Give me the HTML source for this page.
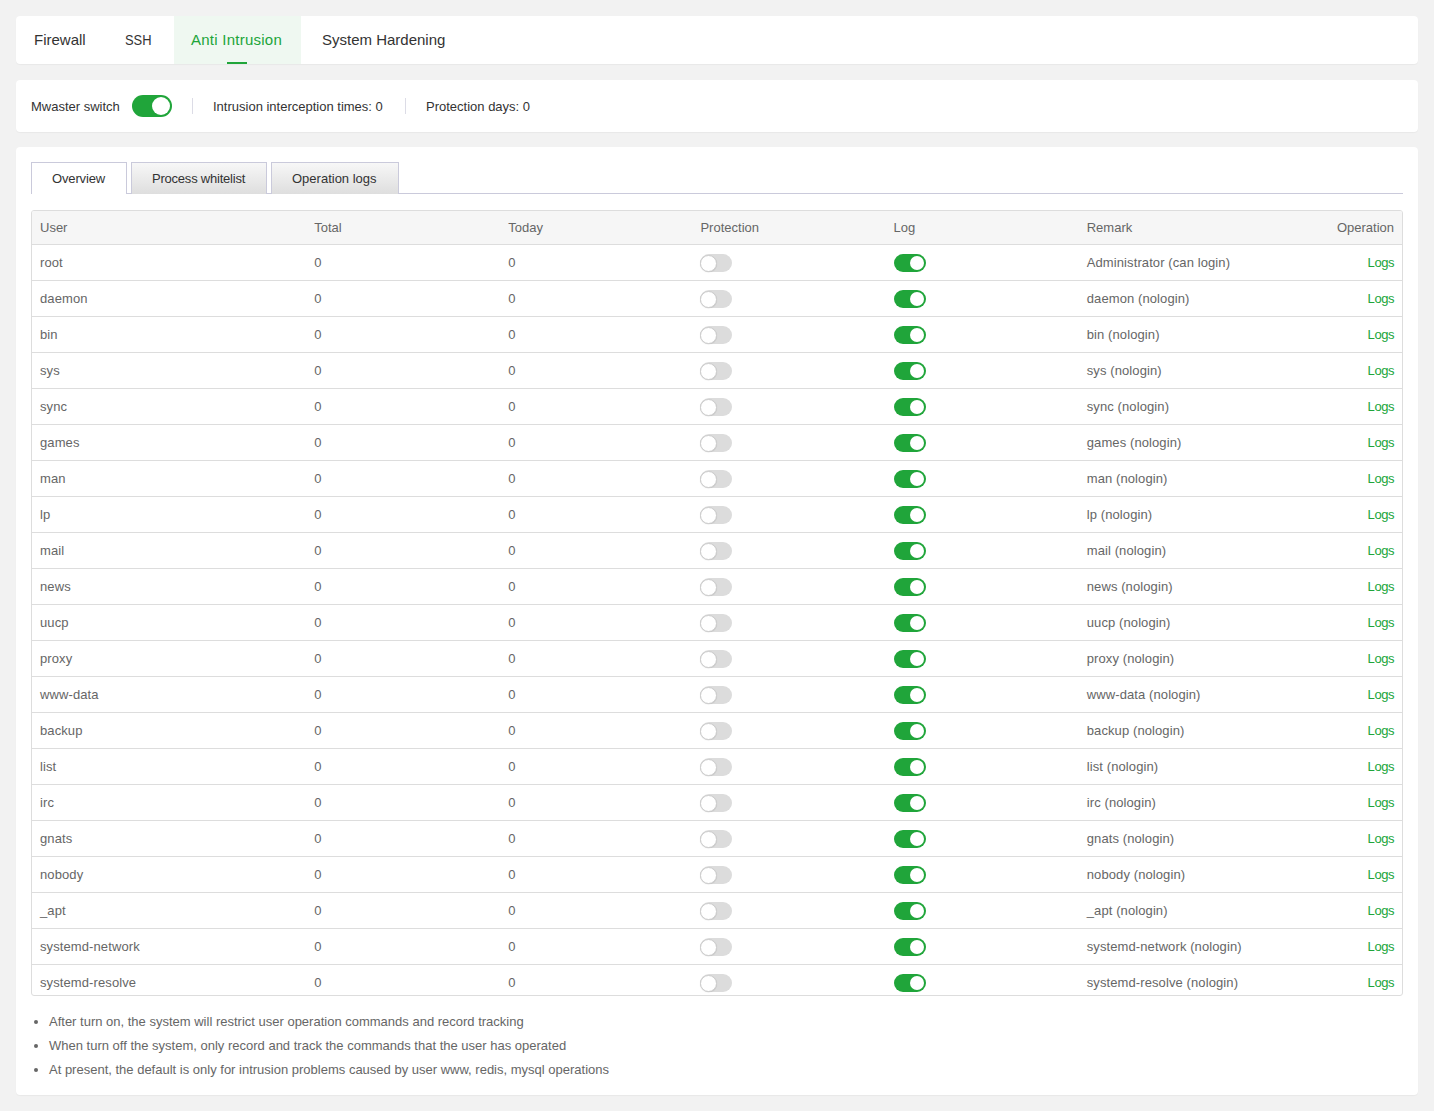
<!DOCTYPE html>
<html><head><meta charset="utf-8">
<style>
*{box-sizing:border-box;margin:0;padding:0}
html,body{width:1434px;height:1111px;overflow:hidden}
body{background:#f2f2f2;font-family:"Liberation Sans",sans-serif;font-size:13px;color:#666;position:relative}
.card{position:absolute;left:16px;width:1402px;background:#fff;border-radius:4px;box-shadow:0 0 1px rgba(0,0,0,.03),0 1px 1px rgba(0,0,0,.04)}
.c1{top:16px;height:48px}
.c2{top:80px;height:52px}
.c3{top:147px;height:948px}
.ttab{position:absolute;top:0;height:48px;line-height:48px;font-size:15px;color:#333;white-space:nowrap}
.ttab.act{color:#20a53a;background:#eff8f1}
.ttab.act:after{content:"";position:absolute;left:53px;bottom:0;width:20px;height:2px;background:#20a53a}
.c2 .lbl{position:absolute;top:1px;line-height:52px;color:#333;white-space:nowrap}
.sep{position:absolute;top:18px;width:1px;height:16px;background:#dcdce6}
.msw{position:absolute;left:116px;top:15px;width:40px;height:22px;border-radius:11px;background:#20a53a}
.msw i{position:absolute;right:2px;top:2px;width:18px;height:18px;border-radius:50%;background:#fff}
.tabnav{position:absolute;left:15px;top:15px;width:1372px;height:32px;border-bottom:1px solid #cacadb}
.tabnav span{position:absolute;top:0;height:32px;line-height:32px;border:1px solid #cacadb;border-bottom:none;color:#333;background:linear-gradient(#f7f7f7,#dedede);white-space:nowrap}
.tabnav span.act{background:#fff;height:32px}
.tbl{position:absolute;left:15px;top:63px;width:1372px;height:786px;border:1px solid #ddd;border-radius:3px;overflow:hidden;background:transparent}
table{border-collapse:collapse;table-layout:fixed;width:1370px}
th{height:33px;background:#f6f6f6;font-weight:normal;text-align:left;padding:0 8px;border-bottom:1px solid #ddd;color:#666}
td{height:36px;padding:0 8px;border-bottom:1px solid #ddd;white-space:nowrap;color:#666;letter-spacing:.1px}
td.r{letter-spacing:0}
th.r,td.r{text-align:right;padding-right:8px}
td a{color:#20a53a;letter-spacing:-.45px}
.sw{display:inline-block;vertical-align:middle;position:relative;top:1px;width:32px;height:18px;border-radius:9px}
.sw.off{background:#dcdcdc}
.sw.off i{position:absolute;left:0;top:.5px;width:17px;height:17px;border-radius:50%;background:#fff;border:1.5px solid #cdcdcd;box-shadow:0 .5px 1px rgba(0,0,0,.12)}
.sw.on{background:#20a53a}
.sw.on i{position:absolute;right:2px;top:2px;width:14px;height:14px;border-radius:50%;background:#fff}
ul.tips{position:absolute;left:33px;top:863px;list-style:none;color:#666}
ul.tips li{line-height:24px;position:relative;padding-left:0;white-space:nowrap}
ul.tips li:before{content:"";position:absolute;left:-15px;top:10px;width:4px;height:4px;border-radius:50%;background:#666}
</style></head><body>
<div class="card c1">
  <div class="ttab" style="left:18px">Firewall</div>
  <div class="ttab" style="left:108px;transform:scaleX(.86);transform-origin:7px 0">SSH</div>
  <div class="ttab act" style="left:158px;width:127px;padding-left:17px;letter-spacing:.25px">Anti Intrusion</div>
  <div class="ttab" style="left:306px">System Hardening</div>
</div>
<div class="card c2">
  <div class="lbl" style="left:15px">Mwaster switch</div>
  <div class="msw"><i></i></div>
  <div class="sep" style="left:176px"></div>
  <div class="lbl" style="left:197px">Intrusion interception times: 0</div>
  <div class="sep" style="left:389px"></div>
  <div class="lbl" style="left:410px">Protection days: 0</div>
</div>
<div class="card c3">
  <div class="tabnav">
    <span class="act" style="left:0;width:96px;padding-left:20px;letter-spacing:-.15px">Overview</span>
    <span style="left:100px;width:136px;padding-left:20px;letter-spacing:-.22px">Process whitelist</span>
    <span style="left:240px;width:128px;padding-left:20px">Operation logs</span>
  </div>
  <div class="tbl">
  <table>
  <colgroup><col style="width:274px"><col style="width:194px"><col style="width:192px"><col style="width:193px"><col style="width:193px"><col style="width:200px"><col style="width:123px"></colgroup>
  <thead><tr><th>User</th><th>Total</th><th>Today</th><th>Protection</th><th>Log</th><th>Remark</th><th class="r">Operation</th></tr></thead>
  <tbody>
<tr><td>root</td><td>0</td><td>0</td><td><span class="sw off"><i></i></span></td><td><span class="sw on"><i></i></span></td><td>Administrator (can login)</td><td class="r"><a>Logs</a></td></tr>
<tr><td>daemon</td><td>0</td><td>0</td><td><span class="sw off"><i></i></span></td><td><span class="sw on"><i></i></span></td><td>daemon (nologin)</td><td class="r"><a>Logs</a></td></tr>
<tr><td>bin</td><td>0</td><td>0</td><td><span class="sw off"><i></i></span></td><td><span class="sw on"><i></i></span></td><td>bin (nologin)</td><td class="r"><a>Logs</a></td></tr>
<tr><td>sys</td><td>0</td><td>0</td><td><span class="sw off"><i></i></span></td><td><span class="sw on"><i></i></span></td><td>sys (nologin)</td><td class="r"><a>Logs</a></td></tr>
<tr><td>sync</td><td>0</td><td>0</td><td><span class="sw off"><i></i></span></td><td><span class="sw on"><i></i></span></td><td>sync (nologin)</td><td class="r"><a>Logs</a></td></tr>
<tr><td>games</td><td>0</td><td>0</td><td><span class="sw off"><i></i></span></td><td><span class="sw on"><i></i></span></td><td>games (nologin)</td><td class="r"><a>Logs</a></td></tr>
<tr><td>man</td><td>0</td><td>0</td><td><span class="sw off"><i></i></span></td><td><span class="sw on"><i></i></span></td><td>man (nologin)</td><td class="r"><a>Logs</a></td></tr>
<tr><td>lp</td><td>0</td><td>0</td><td><span class="sw off"><i></i></span></td><td><span class="sw on"><i></i></span></td><td>lp (nologin)</td><td class="r"><a>Logs</a></td></tr>
<tr><td>mail</td><td>0</td><td>0</td><td><span class="sw off"><i></i></span></td><td><span class="sw on"><i></i></span></td><td>mail (nologin)</td><td class="r"><a>Logs</a></td></tr>
<tr><td>news</td><td>0</td><td>0</td><td><span class="sw off"><i></i></span></td><td><span class="sw on"><i></i></span></td><td>news (nologin)</td><td class="r"><a>Logs</a></td></tr>
<tr><td>uucp</td><td>0</td><td>0</td><td><span class="sw off"><i></i></span></td><td><span class="sw on"><i></i></span></td><td>uucp (nologin)</td><td class="r"><a>Logs</a></td></tr>
<tr><td>proxy</td><td>0</td><td>0</td><td><span class="sw off"><i></i></span></td><td><span class="sw on"><i></i></span></td><td>proxy (nologin)</td><td class="r"><a>Logs</a></td></tr>
<tr><td>www-data</td><td>0</td><td>0</td><td><span class="sw off"><i></i></span></td><td><span class="sw on"><i></i></span></td><td>www-data (nologin)</td><td class="r"><a>Logs</a></td></tr>
<tr><td>backup</td><td>0</td><td>0</td><td><span class="sw off"><i></i></span></td><td><span class="sw on"><i></i></span></td><td>backup (nologin)</td><td class="r"><a>Logs</a></td></tr>
<tr><td>list</td><td>0</td><td>0</td><td><span class="sw off"><i></i></span></td><td><span class="sw on"><i></i></span></td><td>list (nologin)</td><td class="r"><a>Logs</a></td></tr>
<tr><td>irc</td><td>0</td><td>0</td><td><span class="sw off"><i></i></span></td><td><span class="sw on"><i></i></span></td><td>irc (nologin)</td><td class="r"><a>Logs</a></td></tr>
<tr><td>gnats</td><td>0</td><td>0</td><td><span class="sw off"><i></i></span></td><td><span class="sw on"><i></i></span></td><td>gnats (nologin)</td><td class="r"><a>Logs</a></td></tr>
<tr><td>nobody</td><td>0</td><td>0</td><td><span class="sw off"><i></i></span></td><td><span class="sw on"><i></i></span></td><td>nobody (nologin)</td><td class="r"><a>Logs</a></td></tr>
<tr><td>_apt</td><td>0</td><td>0</td><td><span class="sw off"><i></i></span></td><td><span class="sw on"><i></i></span></td><td>_apt (nologin)</td><td class="r"><a>Logs</a></td></tr>
<tr><td>systemd-network</td><td>0</td><td>0</td><td><span class="sw off"><i></i></span></td><td><span class="sw on"><i></i></span></td><td>systemd-network (nologin)</td><td class="r"><a>Logs</a></td></tr>
<tr><td>systemd-resolve</td><td>0</td><td>0</td><td><span class="sw off"><i></i></span></td><td><span class="sw on"><i></i></span></td><td>systemd-resolve (nologin)</td><td class="r"><a>Logs</a></td></tr>
  </tbody></table>
  </div>
  <ul class="tips">
    <li>After turn on, the system will restrict user operation commands and record tracking</li>
    <li>When turn off the system, only record and track the commands that the user has operated</li>
    <li>At present, the default is only for intrusion problems caused by user www, redis, mysql operations</li>
  </ul>
</div>
</body></html>
